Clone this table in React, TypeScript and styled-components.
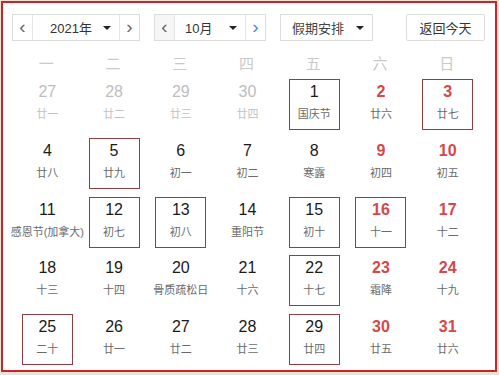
import React from "react";
import styled, { createGlobalStyle } from "styled-components";

type Day = {
  n: number;
  sub: string;
  kind?: "prev" | "rest";
  boxed?: boolean;
};

const weekdays = ["一", "二", "三", "四", "五", "六", "日"];

const days: Day[] = [
  { n: 27, sub: "廿一", kind: "prev" },
  { n: 28, sub: "廿二", kind: "prev" },
  { n: 29, sub: "廿三", kind: "prev" },
  { n: 30, sub: "廿四", kind: "prev" },
  { n: 1, sub: "国庆节", boxed: true },
  { n: 2, sub: "廿六", kind: "rest" },
  { n: 3, sub: "廿七", kind: "rest", boxed: true },
  { n: 4, sub: "廿八" },
  { n: 5, sub: "廿九", boxed: true },
  { n: 6, sub: "初一" },
  { n: 7, sub: "初二" },
  { n: 8, sub: "寒露" },
  { n: 9, sub: "初四", kind: "rest" },
  { n: 10, sub: "初五", kind: "rest" },
  { n: 11, sub: "感恩节(加拿大)" },
  { n: 12, sub: "初七", boxed: true },
  { n: 13, sub: "初八", boxed: true },
  { n: 14, sub: "重阳节" },
  { n: 15, sub: "初十", boxed: true },
  { n: 16, sub: "十一", kind: "rest", boxed: true },
  { n: 17, sub: "十二", kind: "rest" },
  { n: 18, sub: "十三" },
  { n: 19, sub: "十四" },
  { n: 20, sub: "骨质疏松日" },
  { n: 21, sub: "十六" },
  { n: 22, sub: "十七", boxed: true },
  { n: 23, sub: "霜降", kind: "rest" },
  { n: 24, sub: "十九", kind: "rest" },
  { n: 25, sub: "二十", boxed: true },
  { n: 26, sub: "廿一" },
  { n: 27, sub: "廿二" },
  { n: 28, sub: "廿三" },
  { n: 29, sub: "廿四", boxed: true },
  { n: 30, sub: "廿五", kind: "rest" },
  { n: 31, sub: "廿六", kind: "rest" },
];

const App: React.FC = () => {
  return (
    <>
      <GlobalStyle />
      <Frame>
        <Toolbar>
          <Stepper $width={128}>
            <Arrow>‹</Arrow>
            <StepValue $indent={17}>
              2021年
              <Caret />
            </StepValue>
            <Arrow>›</Arrow>
          </Stepper>
          <Stepper $width={112}>
            <Arrow $shade>‹</Arrow>
            <StepValue $indent={10}>
              10月
              <Caret />
            </StepValue>
            <Arrow $active>›</Arrow>
          </Stepper>
          <Select>
            假期安排
            <Caret />
          </Select>
          <TodayButton>返回今天</TodayButton>
        </Toolbar>
        <WeekHeader>
          {weekdays.map((w) => (
            <WeekName key={w}>{w}</WeekName>
          ))}
        </WeekHeader>
        <DaysGrid>
          {days.map((d, i) => (
            <Cell key={i} $boxed={d.boxed}>
              <Num $kind={d.kind}>{d.n}</Num>
              <Sub $kind={d.kind}>{d.sub}</Sub>
            </Cell>
          ))}
        </DaysGrid>
      </Frame>
    </>
  );
};

export default App;

const GlobalStyle = createGlobalStyle`
  html, body {
    margin: 0;
    background: #ebe3d3;
  }
  body {
    font-family: "Liberation Sans", "Noto Sans CJK SC", Arial, sans-serif;
    color: #222;
  }
`;

const Frame = styled.div`
  box-sizing: border-box;
  margin: 1px 0 0 1px;
  width: 496px;
  height: 371px;
  border: 2px solid #c9232b;
  background: #fff;
  padding: 11px 9px 0;
`;

const Toolbar = styled.div`
  display: flex;
  align-items: center;
  height: 27px;
`;

const Stepper = styled.div<{ $width: number }>`
  box-sizing: border-box;
  display: flex;
  width: ${(p) => p.$width}px;
  height: 27px;
  border: 1px solid #dcdcdc;
  margin-right: 14px;
`;

const Arrow = styled.div<{ $shade?: boolean; $active?: boolean }>`
  flex: 0 0 20px;
  display: flex;
  align-items: center;
  justify-content: center;
  font-size: 19px;
  line-height: 1;
  padding-bottom: 3px;
  box-sizing: border-box;
  color: ${(p) => (p.$active ? "#3a8ee6" : "#666")};
  background: ${(p) => (p.$shade ? "#f6f6f6" : "#fff")};
  &:first-child {
    border-right: 1px solid #e6e6e6;
  }
  &:last-child {
    border-left: 1px solid #e6e6e6;
  }
`;

const StepValue = styled.div<{ $indent: number }>`
  flex: 1;
  display: flex;
  align-items: center;
  justify-content: space-between;
  padding: 0 8px 0 ${(p) => p.$indent}px;
  font-size: 13px;
  color: #333;
`;

const Caret = styled.span`
  width: 0;
  height: 0;
  border-left: 4px solid transparent;
  border-right: 4px solid transparent;
  border-top: 4px solid #222;
`;

const Select = styled.div`
  box-sizing: border-box;
  display: flex;
  align-items: center;
  justify-content: space-between;
  width: 93px;
  height: 27px;
  border: 1px solid #dcdcdc;
  padding: 0 8px 0 11px;
  font-size: 13px;
  color: #444;
`;

const TodayButton = styled.div`
  box-sizing: border-box;
  display: flex;
  align-items: center;
  justify-content: center;
  margin-left: 33px;
  width: 79px;
  height: 27px;
  border: 1px solid #dcdcdc;
  border-radius: 2px;
  font-size: 13px;
  color: #333;
`;

const WeekHeader = styled.div`
  display: grid;
  grid-template-columns: repeat(7, 1fr);
  width: 467px;
  margin: 7px 0 0 1px;
  height: 28px;
  align-items: center;
`;

const WeekName = styled.div`
  text-align: center;
  font-size: 15px;
  color: #cacaca;
`;

const DaysGrid = styled.div`
  display: grid;
  grid-template-columns: repeat(7, 1fr);
  grid-auto-rows: 50px;
  row-gap: 8.75px;
  width: 467px;
  margin: 3px 0 0 2px;
`;

const Cell = styled.div<{ $boxed?: boolean }>`
  box-sizing: border-box;
  justify-self: center;
  width: 51px;
  height: 51px;
  border: 1px solid ${(p) => (p.$boxed ? "#8f3f42" : "transparent")};
  display: flex;
  flex-direction: column;
  align-items: center;
  padding-top: 3px;
`;

const Num = styled.div<{ $kind?: "prev" | "rest" }>`
  font-size: 16px;
  line-height: 18px;
  font-weight: ${(p) => (p.$kind === "rest" ? 700 : 400)};
  color: ${(p) =>
    p.$kind === "prev" ? "#bdbdbd" : p.$kind === "rest" ? "#d4474b" : "#1a1a1a"};
`;

const Sub = styled.div<{ $kind?: "prev" | "rest" }>`
  margin-top: 6px;
  font-size: 11px;
  line-height: 14px;
  white-space: nowrap;
  color: ${(p) => (p.$kind === "prev" ? "#c2c2c2" : "#6a6a6a")};
`;
